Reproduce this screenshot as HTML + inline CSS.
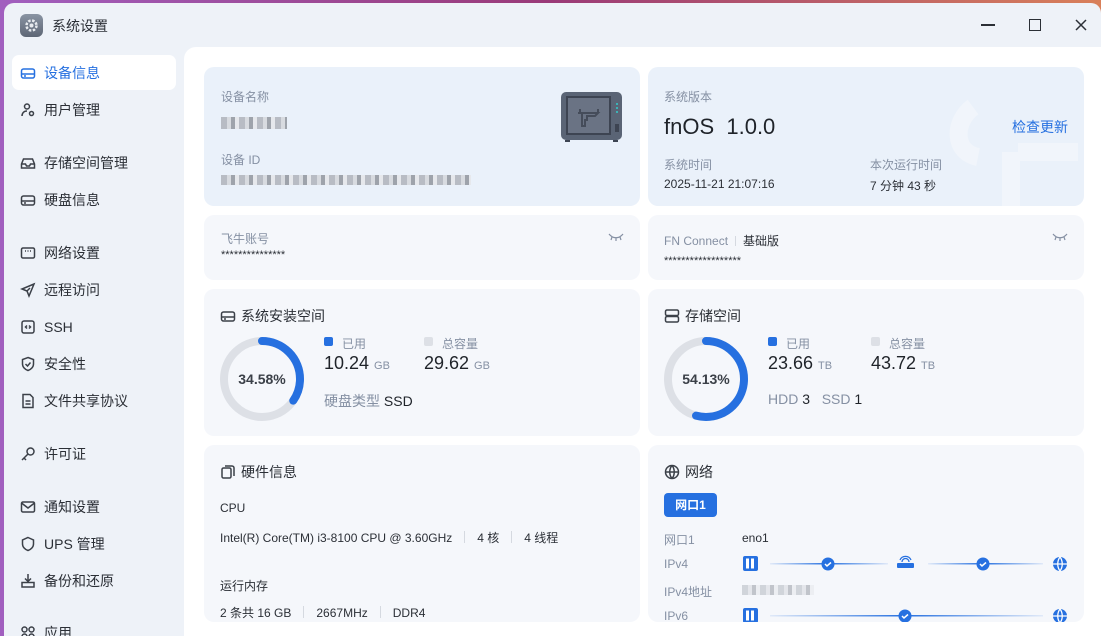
<!DOCTYPE html>
<html><head><meta charset="utf-8"><style>
*{margin:0;padding:0;box-sizing:border-box}
html{width:1101px;height:636px;overflow:hidden}
body{width:1101px;height:636px;overflow:hidden;position:relative;font-family:"Liberation Sans","Noto Sans CJK SC",sans-serif;background:linear-gradient(90deg,#a15fbf 0%,#9a3a78 50%,#d9805a 100%);}
.win{position:absolute;left:4px;top:3px;width:1097px;height:633px;background:#eef2f8;border-radius:10px 10px 0 0}
.abs{position:absolute}
.side{font-size:14px;color:#2b2f36}
.item{position:absolute;left:12px;width:164px;height:35px;display:flex;align-items:center;padding-left:8px}
.item svg{width:16px;height:16px;margin-right:8px;fill:none;stroke:#3b4048;stroke-width:1.5}
.item.act{background:#fff;border-radius:7px;color:#2670e0}
.item.act svg{stroke:#2670e0}
.main{position:absolute;left:184px;top:47px;width:917px;height:589px;background:#fff;border-radius:12px 0 0 0}
.card{position:absolute;background:#f5f7fb;border-radius:10px}
.blue{background:#eaf1fa}
.lbl{position:absolute;font-size:12px;color:#8590a3}
.val{position:absolute;font-size:12px;color:#2b2f36}
.ttl{position:absolute;font-size:14px;color:#2b2f36;display:flex;align-items:center}
.ttl svg{width:16px;height:16px;margin-right:5px;fill:none;stroke:#3b4048;stroke-width:1.5}
.sep{display:inline-block;width:1px;height:12px;background:#d5d9e0;margin:0 12px;vertical-align:-1px}
.blur{position:absolute;height:10px;background:repeating-linear-gradient(90deg,#b8bcc4 0 6px,#d8dbe0 6px 10px,#9ea3ab 10px 14px,#e6e8ec 14px 18px)}
</style></head><body>
<div class="win"></div>
<!-- title bar -->
<div class="abs" style="left:20px;top:14px;width:23px;height:23px;border-radius:6px;background:linear-gradient(#8a94a3,#5d6675)"><svg viewBox="0 0 23 23" width="23" height="23"><circle cx="11.5" cy="11.5" r="5" fill="none" stroke="#e8ebef" stroke-width="2.5" stroke-dasharray="2.5 1.5"/><circle cx="11.5" cy="11.5" r="2" fill="#e8ebef"/></svg></div>
<div class="abs" style="left:52px;top:16px;font-size:14px;color:#2b2f36">系统设置</div>
<div class="abs" style="left:981px;top:24px;width:14px;height:1.5px;background:#2b2f36"></div>
<div class="abs" style="left:1029px;top:19px;width:12px;height:12px;border:1.5px solid #2b2f36"></div>
<svg class="abs" style="left:1075px;top:19px" width="12" height="12"><path d="M1 1L11 11M11 1L1 11" stroke="#2b2f36" stroke-width="1.5"/></svg>
<!-- sidebar -->
<div class="side">
<div class="item act" style="top:55px"><svg viewBox="0 0 16 16"><rect x="1.5" y="4" width="13" height="9" rx="2"/><path d="M1.5 9h13M4 11h2"/></svg>设备信息</div>
<div class="item" style="top:92px"><svg viewBox="0 0 16 16"><circle cx="7" cy="4.5" r="2.5"/><path d="M2 14c0-3 2-5 5-5"/><circle cx="11.5" cy="11.5" r="2"/></svg>用户管理</div>
<div class="item" style="top:145px"><svg viewBox="0 0 16 16"><path d="M1.5 9l2-5h9l2 5v4h-13z M1.5 9h4l1 2h3l1-2h4"/></svg>存储空间管理</div>
<div class="item" style="top:182px"><svg viewBox="0 0 16 16"><rect x="1.5" y="4" width="13" height="9" rx="2"/><path d="M1.5 9h13M4 11h2"/></svg>硬盘信息</div>
<div class="item" style="top:235px"><svg viewBox="0 0 16 16"><rect x="1.5" y="3" width="13" height="10" rx="1.5"/><path d="M5 6h1M7.5 6h1M10 6h1"/></svg>网络设置</div>
<div class="item" style="top:272px"><svg viewBox="0 0 16 16"><path d="M14 2L2 7l5 2 2 5z M7 9l3-3"/></svg>远程访问</div>
<div class="item" style="top:309px"><svg viewBox="0 0 16 16"><rect x="2" y="2" width="12" height="12" rx="2"/><path d="M7 6.5L5.5 8 7 9.5M9 6.5l1.5 1.5L9 9.5"/></svg>SSH</div>
<div class="item" style="top:346px"><svg viewBox="0 0 16 16"><path d="M8 1.5l5.5 2v4.5c0 3-2.5 5.5-5.5 6.5C5 13.5 2.5 11 2.5 8V3.5z M5.5 8l2 2 3-3.5"/></svg>安全性</div>
<div class="item" style="top:383px"><svg viewBox="0 0 16 16"><path d="M3 1.5h7l3 3v10H3z M5.5 8h5M5.5 11h5"/></svg>文件共享协议</div>
<div class="item" style="top:436px"><svg viewBox="0 0 16 16"><circle cx="10.5" cy="5.5" r="3.5"/><path d="M8 8l-6 6M4 12l2 2"/></svg>许可证</div>
<div class="item" style="top:489px"><svg viewBox="0 0 16 16"><rect x="1.5" y="3" width="13" height="10" rx="1.5"/><path d="M1.5 4l6.5 5 6.5-5"/></svg>通知设置</div>
<div class="item" style="top:526px"><svg viewBox="0 0 16 16"><path d="M8 1.5l5.5 2.5v4c0 3-2.5 5.5-5.5 6.5C5 13.5 2.5 11 2.5 8V4z"/></svg>UPS 管理</div>
<div class="item" style="top:563px"><svg viewBox="0 0 16 16"><path d="M8 1v7M5 5.5L8 8.5 11 5.5M2 9.5h12v4.5H2z"/></svg>备份和还原</div>
<div class="item" style="top:615px"><svg viewBox="0 0 16 16"><circle cx="4.5" cy="4.5" r="2.5"/><circle cx="11.5" cy="4.5" r="2.5"/><circle cx="4.5" cy="11.5" r="2.5"/><circle cx="11.5" cy="11.5" r="2.5"/></svg>应用</div>
</div>
<div class="main"></div>
<!-- row1 -->
<div class="card blue" style="left:204px;top:67px;width:436px;height:139px"></div>
<div class="lbl" style="left:221px;top:88px">设备名称</div>
<div class="blur" style="left:221px;top:117px;width:66px;height:12px"></div>
<div class="lbl" style="left:221px;top:151px">设备 ID</div>
<div class="blur" style="left:221px;top:175px;width:250px"></div>
<svg class="abs" style="left:560px;top:91px" width="64" height="52" viewBox="0 0 64 52"><rect x="1" y="1" width="61" height="48" rx="5" fill="#5a6475"/><rect x="6" y="5" width="45" height="39" fill="#3d4452"/><rect x="8" y="7" width="41" height="35" fill="#6a7384"/><path d="M20 22v-4M38 22v-4M18 22h20l-3 3h-8v4h-2v6h-3v-13" fill="none" stroke="#454c5a" stroke-width="2"/><circle cx="57" cy="13" r="1" fill="#3cc"/><circle cx="57" cy="17" r="1" fill="#3cc"/><circle cx="57" cy="21" r="1" fill="#3cc"/><rect x="55" y="33" width="4" height="8" fill="#3d4452"/><rect x="5" y="49" width="5" height="2" fill="#3d4452"/><rect x="53" y="49" width="5" height="2" fill="#3d4452"/></svg>
<div class="card blue" style="left:648px;top:67px;width:436px;height:139px;overflow:hidden"><svg class="abs" style="left:295px;top:30px" width="140" height="110"><path d="M30 10c-20 15-20 45 5 50M75 55h60M68 55v60" fill="none" stroke="#f1f5fb" stroke-width="18"/></svg></div>
<div class="lbl" style="left:664px;top:88px">系统版本</div>
<div class="abs" style="left:664px;top:114px;font-size:22px;color:#1f2329">fnOS&nbsp; 1.0.0</div>
<div class="abs" style="left:1012px;top:117px;font-size:14px;color:#2670e0">检查更新</div>
<div class="lbl" style="left:664px;top:156px">系统时间</div>
<div class="val" style="left:664px;top:177px">2025-11-21 21:07:16</div>
<div class="lbl" style="left:870px;top:156px">本次运行时间</div>
<div class="val" style="left:870px;top:177px">7 分钟 43 秒</div>
<!-- row2 -->
<div class="card" style="left:204px;top:215px;width:436px;height:65px"></div>
<div class="lbl" style="left:221px;top:230px">飞牛账号</div>
<div class="val" style="left:221px;top:249px;font-size:11px">***************</div>
<svg class="abs" style="left:608px;top:233px" width="16" height="8"><path d="M1 1c4 5 10 5 14 0M4 4l-1 3M8 5v3M12 4l1 3" stroke="#8590a3" fill="none" stroke-width="1.2"/></svg>
<div class="card" style="left:648px;top:215px;width:436px;height:65px"></div>
<div class="lbl" style="left:664px;top:232px">FN Connect<span class="sep" style="margin:0 7px;height:10px"></span><span style="color:#2b2f36">基础版</span></div>
<div class="val" style="left:664px;top:255px;font-size:11px">******************</div>
<svg class="abs" style="left:1052px;top:233px" width="16" height="8"><path d="M1 1c4 5 10 5 14 0M4 4l-1 3M8 5v3M12 4l1 3" stroke="#8590a3" fill="none" stroke-width="1.2"/></svg>
<!-- row3 -->
<div class="card" style="left:204px;top:289px;width:436px;height:147px"></div>
<div class="ttl" style="left:220px;top:306px"><svg viewBox="0 0 16 16"><rect x="1.5" y="4" width="13" height="9" rx="2"/><path d="M1.5 9h13M4 11h2"/></svg>系统安装空间</div>
<svg class="abs" style="left:220px;top:337px" width="86" height="86"><circle cx="42" cy="42" r="38" fill="none" stroke="#dde0e6" stroke-width="8"/><circle cx="42" cy="42" r="38" fill="none" stroke="#2670e0" stroke-width="8" stroke-linecap="round" stroke-dasharray="82.6 300" transform="rotate(-90 42 42)"/></svg>
<div class="abs" style="left:220px;top:371px;width:84px;text-align:center;font-size:14px;font-weight:bold;color:#3b4048">34.58%</div>
<div class="abs" style="left:324px;top:337px;width:9px;height:9px;background:#2670e0;border-radius:2px"></div>
<div class="lbl" style="left:342px;top:335px">已用</div>
<div class="abs" style="left:324px;top:353px;font-size:18px;color:#1f2329">10.24 <span style="font-size:11px;color:#8590a3">GB</span></div>
<div class="abs" style="left:424px;top:337px;width:9px;height:9px;background:#dde0e6;border-radius:2px"></div>
<div class="lbl" style="left:442px;top:335px">总容量</div>
<div class="abs" style="left:424px;top:353px;font-size:18px;color:#1f2329">29.62 <span style="font-size:11px;color:#8590a3">GB</span></div>
<div class="abs" style="left:324px;top:391px;font-size:14px;color:#8590a3">硬盘类型 <span style="color:#1f2329">SSD</span></div>

<div class="card" style="left:648px;top:289px;width:436px;height:147px"></div>
<div class="ttl" style="left:664px;top:306px"><svg viewBox="0 0 16 16"><rect x="1.5" y="2" width="13" height="5.5" rx="1.5"/><rect x="1.5" y="8.5" width="13" height="5.5" rx="1.5"/></svg>存储空间</div>
<svg class="abs" style="left:664px;top:337px" width="86" height="86"><circle cx="42" cy="42" r="38" fill="none" stroke="#dde0e6" stroke-width="8"/><circle cx="42" cy="42" r="38" fill="none" stroke="#2670e0" stroke-width="8" stroke-linecap="round" stroke-dasharray="129.3 300" transform="rotate(-90 42 42)"/></svg>
<div class="abs" style="left:664px;top:371px;width:84px;text-align:center;font-size:14px;font-weight:bold;color:#3b4048">54.13%</div>
<div class="abs" style="left:768px;top:337px;width:9px;height:9px;background:#2670e0;border-radius:2px"></div>
<div class="lbl" style="left:786px;top:335px">已用</div>
<div class="abs" style="left:768px;top:353px;font-size:18px;color:#1f2329">23.66 <span style="font-size:11px;color:#8590a3">TB</span></div>
<div class="abs" style="left:871px;top:337px;width:9px;height:9px;background:#dde0e6;border-radius:2px"></div>
<div class="lbl" style="left:889px;top:335px">总容量</div>
<div class="abs" style="left:871px;top:353px;font-size:18px;color:#1f2329">43.72 <span style="font-size:11px;color:#8590a3">TB</span></div>
<div class="abs" style="left:768px;top:391px;font-size:14px;color:#8590a3">HDD <span style="color:#1f2329">3</span>&nbsp;&nbsp; SSD <span style="color:#1f2329">1</span></div>
<!-- row4 -->
<div class="card" style="left:204px;top:445px;width:436px;height:177px"></div>
<div class="ttl" style="left:220px;top:462px"><svg viewBox="0 0 16 16"><rect x="2" y="4" width="9" height="10" rx="1.5"/><path d="M5 2h7a2 2 0 0 1 2 2v8"/></svg>硬件信息</div>
<div class="val" style="left:220px;top:501px">CPU</div>
<div class="val" style="left:220px;top:529px">Intel(R) Core(TM) i3-8100 CPU @ 3.60GHz<span class="sep"></span>4 核<span class="sep"></span>4 线程</div>
<div class="val" style="left:220px;top:577px">运行内存</div>
<div class="val" style="left:220px;top:604px">2 条共 16 GB<span class="sep"></span>2667MHz<span class="sep"></span>DDR4</div>

<div class="card" style="left:648px;top:445px;width:436px;height:177px"></div>
<div class="ttl" style="left:664px;top:462px"><svg viewBox="0 0 16 16"><circle cx="8" cy="8" r="6.5"/><path d="M1.5 8h13M8 1.5c-3 3.5-3 9.5 0 13M8 1.5c3 3.5 3 9.5 0 13"/></svg>网络</div>
<div class="abs" style="left:664px;top:493px;width:53px;height:24px;background:#2670e0;border-radius:4px;color:#fff;font-size:12px;font-weight:bold;text-align:center;line-height:24px">网口1</div>
<div class="lbl" style="left:664px;top:531px">网口1</div>
<div class="val" style="left:742px;top:531px">eno1</div>
<div class="lbl" style="left:664px;top:557px">IPv4</div>
<div class="lbl" style="left:664px;top:583px">IPv4地址</div>
<div class="blur" style="left:742px;top:585px;width:72px;opacity:.6"></div>
<div class="lbl" style="left:664px;top:609px">IPv6</div>
<svg class="abs" style="left:740px;top:552px" width="332" height="72">
<defs><linearGradient id="g" x1="0" x2="1"><stop offset="0" stop-color="#2670e0" stop-opacity=".1"/><stop offset="1" stop-color="#2670e0"/></linearGradient><linearGradient id="g2" x1="0" x2="1"><stop offset="0" stop-color="#2670e0"/><stop offset="1" stop-color="#2670e0" stop-opacity=".1"/></linearGradient>
<g id="srv"><rect x="3" y="4" width="15" height="15" rx="2" fill="#2670e0"/><rect x="6" y="6.5" width="3" height="10" fill="#fff"/><rect x="11" y="6.5" width="3" height="10" fill="#fff"/></g>
<g id="glb"><circle cx="0" cy="0" r="7" fill="#2670e0"/><path d="M-7 0h14M0-7c-3 4-3 10 0 14M0-7c3 4 3 10 0 14" stroke="#fff" stroke-width="1.3" fill="none"/></g>
<g id="chk"><circle r="6.5" fill="#2670e0"/><path d="M-3 0l2 2 4-3.5" stroke="#fff" stroke-width="1.5" fill="none"/></g></defs>
<use href="#srv" x="0" y="0"/>
<rect x="30" y="11" width="58" height="1.5" fill="url(#g)"/><rect x="88" y="11" width="60" height="1.5" fill="url(#g2)"/>
<use href="#chk" x="88" y="12"/>
<rect x="157" y="11" width="17" height="5" rx="1" fill="#2670e0"/><path d="M160 8a6 6 0 0 1 11 0M162 10a3 3 0 0 1 7 0" stroke="#2670e0" stroke-width="1.3" fill="none"/>
<rect x="188" y="11" width="55" height="1.5" fill="url(#g)"/><rect x="243" y="11" width="60" height="1.5" fill="url(#g2)"/>
<use href="#chk" x="243" y="12"/>
<use href="#glb" x="320" y="12"/>
<use href="#srv" x="0" y="52"/>
<rect x="30" y="63" width="135" height="1.5" fill="url(#g)"/><rect x="165" y="63" width="138" height="1.5" fill="url(#g2)"/>
<use href="#chk" x="165" y="64"/>
<use href="#glb" x="320" y="64"/>
</svg>
<div class="abs" style="left:184px;top:622px;width:917px;height:14px;background:#fff"></div>
</body></html>
